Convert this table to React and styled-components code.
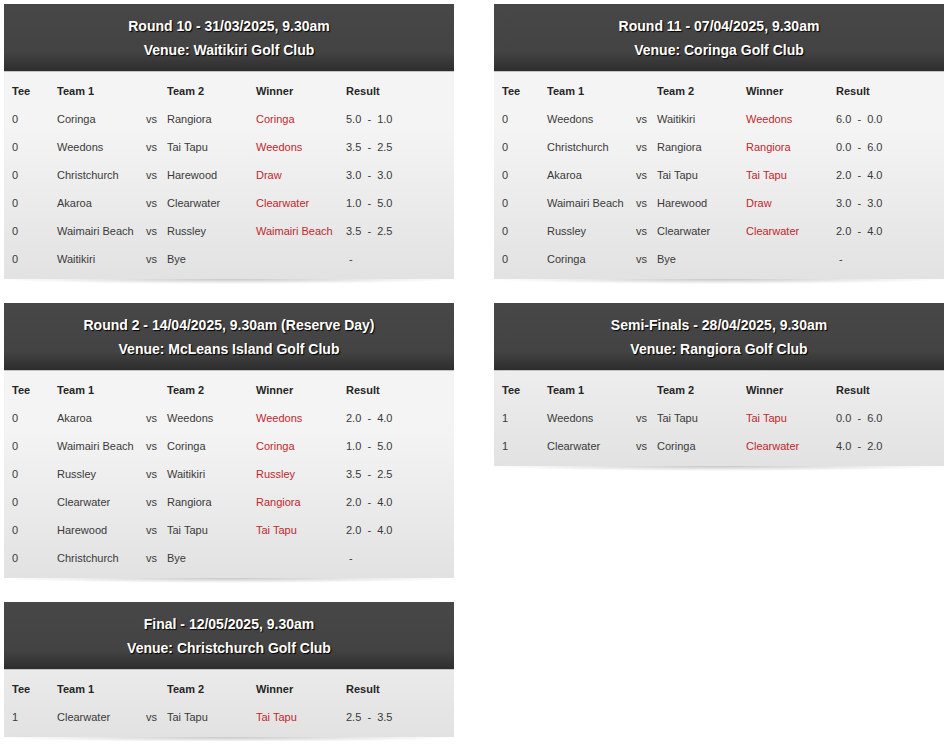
import React from "react";
import styled, { createGlobalStyle } from "styled-components";

const Global = createGlobalStyle`
  html, body { margin: 0; padding: 0; background: #fff; }
  body { font-family: "Liberation Sans", Arial, sans-serif; }
`;

const Page = styled.div`
  display: grid;
  grid-template-columns: 450px 450px;
  column-gap: 40px;
  padding: 4px;
  align-items: start;
`;

const Column = styled.div`
  display: flex;
  flex-direction: column;
  gap: 24px;
`;

const Card = styled.section`
  position: relative;
  &::after {
    content: "";
    position: absolute;
    left: 0;
    right: 0;
    bottom: -5px;
    height: 5px;
    background: radial-gradient(ellipse at 50% 0%, rgba(0,0,0,0.22) 0%, rgba(0,0,0,0.08) 45%, rgba(0,0,0,0) 72%);
  }
`;

const Header = styled.header`
  background: linear-gradient(to bottom, #474747 0%, #434343 72%, #2d2d2d 100%);
  border-bottom: 1px solid #c4c4c4;
  padding: 10px 0 9px;
  text-align: center;
  color: #fff;
  font-weight: bold;
  font-size: 14px;
  line-height: 24px;
  text-shadow: 1px 1px 1px #000;
`;

const Line = styled.div``;

const Body = styled.div`
  background: linear-gradient(to top, #e2e2e2 0px, #f4f4f4 150px);
  padding: 5px 0 6px 8px;
`;

const Row = styled.div`
  display: grid;
  grid-template-columns: 45px 89px 21px 89px 90px 1fr;
  height: 28px;
  align-items: center;
  font-size: 11px;
  color: ${(p) => (p.$head ? "#262626" : "#3a3a3a")};
  font-weight: ${(p) => (p.$head ? "bold" : "normal")};
  white-space: nowrap;
`;

const Cell = styled.span`
  color: ${(p) => (p.$win ? "#c1272d" : "inherit")};
`;

const data = [
  [
    {
      title: "Round 10 - 31/03/2025, 9.30am",
      venue: "Venue: Waitikiri Golf Club",
      rows: [
        ["0", "Coringa", "Rangiora", "Coringa", "5.0", "1.0"],
        ["0", "Weedons", "Tai Tapu", "Weedons", "3.5", "2.5"],
        ["0", "Christchurch", "Harewood", "Draw", "3.0", "3.0"],
        ["0", "Akaroa", "Clearwater", "Clearwater", "1.0", "5.0"],
        ["0", "Waimairi Beach", "Russley", "Waimairi Beach", "3.5", "2.5"],
        ["0", "Waitikiri", "Bye", "", null, null],
      ],
    },
    {
      title: "Round 2 - 14/04/2025, 9.30am (Reserve Day)",
      venue: "Venue: McLeans Island Golf Club",
      rows: [
        ["0", "Akaroa", "Weedons", "Weedons", "2.0", "4.0"],
        ["0", "Waimairi Beach", "Coringa", "Coringa", "1.0", "5.0"],
        ["0", "Russley", "Waitikiri", "Russley", "3.5", "2.5"],
        ["0", "Clearwater", "Rangiora", "Rangiora", "2.0", "4.0"],
        ["0", "Harewood", "Tai Tapu", "Tai Tapu", "2.0", "4.0"],
        ["0", "Christchurch", "Bye", "", null, null],
      ],
    },
    {
      title: "Final - 12/05/2025, 9.30am",
      venue: "Venue: Christchurch Golf Club",
      rows: [["1", "Clearwater", "Tai Tapu", "Tai Tapu", "2.5", "3.5"]],
    },
  ],
  [
    {
      title: "Round 11 - 07/04/2025, 9.30am",
      venue: "Venue: Coringa Golf Club",
      rows: [
        ["0", "Weedons", "Waitikiri", "Weedons", "6.0", "0.0"],
        ["0", "Christchurch", "Rangiora", "Rangiora", "0.0", "6.0"],
        ["0", "Akaroa", "Tai Tapu", "Tai Tapu", "2.0", "4.0"],
        ["0", "Waimairi Beach", "Harewood", "Draw", "3.0", "3.0"],
        ["0", "Russley", "Clearwater", "Clearwater", "2.0", "4.0"],
        ["0", "Coringa", "Bye", "", null, null],
      ],
    },
    {
      title: "Semi-Finals - 28/04/2025, 9.30am",
      venue: "Venue: Rangiora Golf Club",
      rows: [
        ["1", "Weedons", "Tai Tapu", "Tai Tapu", "0.0", "6.0"],
        ["1", "Clearwater", "Coringa", "Clearwater", "4.0", "2.0"],
      ],
    },
  ],
];

function Fixture({ f }) {
  return (
    <Card>
      <Header>
        <Line>{f.title}</Line>
        <Line>{f.venue}</Line>
      </Header>
      <Body>
        <Row $head>
          <Cell>Tee</Cell>
          <Cell>Team 1</Cell>
          <Cell></Cell>
          <Cell>Team 2</Cell>
          <Cell>Winner</Cell>
          <Cell>Result</Cell>
        </Row>
        {f.rows.map((r, i) => (
          <Row key={i}>
            <Cell>{r[0]}</Cell>
            <Cell>{r[1]}</Cell>
            <Cell>vs</Cell>
            <Cell>{r[2]}</Cell>
            <Cell $win>{r[3]}</Cell>
            <Cell>
              {r[4] === null ? "\u00a0-" : `${r[4]}\u00a0\u00a0-\u00a0\u00a0${r[5]}`}
            </Cell>
          </Row>
        ))}
      </Body>
    </Card>
  );
}

export default function App() {
  return (
    <>
      <Global />
      <Page>
        {data.map((col, ci) => (
          <Column key={ci}>
            {col.map((f, fi) => (
              <Fixture key={fi} f={f} />
            ))}
          </Column>
        ))}
      </Page>
    </>
  );
}
